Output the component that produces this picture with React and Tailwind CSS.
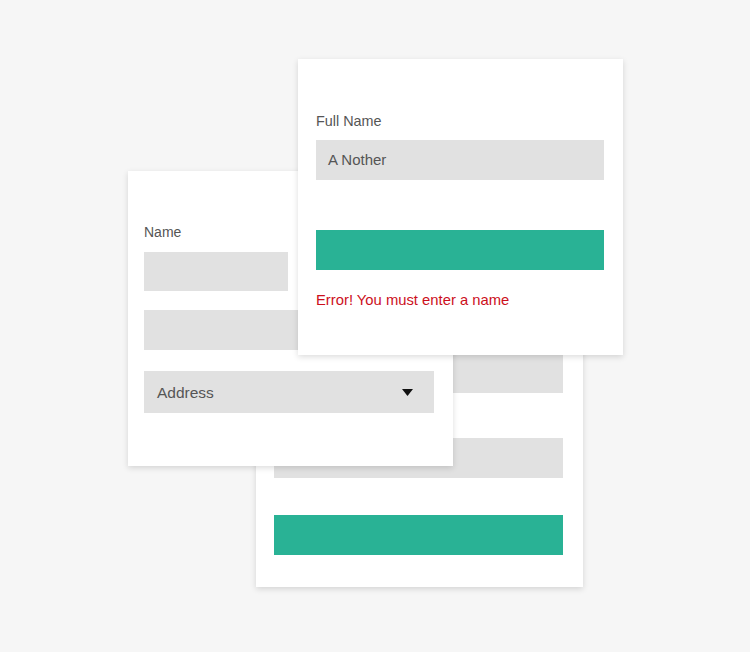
export default function App() {
  const font = { fontFamily: '"Liberation Sans", Arial, sans-serif' };
  return (
    <div className="relative w-[750px] h-[652px] bg-[#f6f6f6] overflow-hidden" style={font}>
      {/* Back card */}
      <div className="absolute left-[256px] top-[275px] w-[327px] bg-white shadow-[0_2px_6px_rgba(0,0,0,0.14)] px-[18px] pt-[78px] pb-[32px] flex flex-col">
        <div className="h-10 w-[289px] bg-[#e1e1e1]" />
        <div className="mt-[45px] h-10 w-[289px] bg-[#e1e1e1]" />
        <div className="mt-[37px] h-10 w-[289px] bg-[#29b295]" />
      </div>

      {/* Middle card */}
      <div className="absolute left-[128px] top-[171px] w-[325px] h-[295px] bg-white shadow-[0_2px_6px_rgba(0,0,0,0.14)] pl-[16px] pt-[51px] flex flex-col">
        <div className="h-5 leading-5 text-[14px] text-[#555]">Name</div>
        <div className="mt-[10px] h-[39px] w-[144px] bg-[#e1e1e1]" />
        <div className="mt-[19px] h-10 w-[290px] bg-[#e1e1e1]" />
        <div className="mt-[21px] h-[42px] w-[290px] bg-[#e1e1e1] flex items-center justify-between pl-[13px] pr-[21px]">
          <span className="text-[15.5px] text-[#555] pt-[2px]">Address</span>
          <svg width="11" height="7" viewBox="0 0 11 7" className="mt-[1px]">
            <path d="M0 0 L11 0 L5.5 7 Z" fill="#111" />
          </svg>
        </div>
      </div>

      {/* Top card */}
      <div className="absolute left-[298px] top-[59px] w-[325px] h-[296px] bg-white shadow-[0_2px_6px_rgba(0,0,0,0.14)] pl-[18px] pt-[52px] flex flex-col">
        <div className="h-5 leading-5 text-[14.4px] text-[#555]">Full Name</div>
        <div className="mt-[9px] h-10 w-[288px] bg-[#e1e1e1] flex items-center pl-[12px]">
          <span className="text-[15px] text-[#555]">A Nother</span>
        </div>
        <div className="mt-[50px] h-10 w-[288px] bg-[#29b295]" />
        <div className="mt-[20px] h-5 leading-5 text-[14.8px] text-[#cc0f1c]">Error! You must enter a name</div>
      </div>
    </div>
  );
}
